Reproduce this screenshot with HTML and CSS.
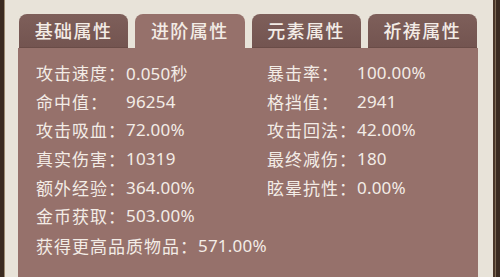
FILE: index.html
```html
<!DOCTYPE html>
<html lang="zh-CN">
<head>
    <meta charset="UTF-8">
    <title>进阶属性</title>
    <link rel="stylesheet" href="styles.css">
</head>
<body>
    <div class="edge edge-left"></div>
    <div class="frame">
        <div class="tabs">
            <div class="tab">基础属性</div>
            <div class="tab active">进阶属性</div>
            <div class="tab">元素属性</div>
            <div class="tab">祈祷属性</div>
        </div>
        <div class="panel">
            <div class="stats">
                <div class="stat"><span class="label">攻击速度：</span><span class="value">0.050秒</span></div>
                <div class="stat"><span class="label">暴击率：</span><span class="value">100.00%</span></div>
                <div class="stat"><span class="label">命中值：</span><span class="value">96254</span></div>
                <div class="stat"><span class="label">格挡值：</span><span class="value">2941</span></div>
                <div class="stat"><span class="label">攻击吸血：</span><span class="value">72.00%</span></div>
                <div class="stat"><span class="label">攻击回法：</span><span class="value">42.00%</span></div>
                <div class="stat"><span class="label">真实伤害：</span><span class="value">10319</span></div>
                <div class="stat"><span class="label">最终减伤：</span><span class="value">180</span></div>
                <div class="stat"><span class="label">额外经验：</span><span class="value">364.00%</span></div>
                <div class="stat"><span class="label">眩晕抗性：</span><span class="value">0.00%</span></div>
                <div class="stat"><span class="label">金币获取：</span><span class="value">503.00%</span></div>
                <div class="stat"></div>
                <div class="stat wide"><span class="label">获得更高品质物品：</span><span class="value">571.00%</span></div>
            </div>
        </div>
    </div>
    <div class="edge edge-right"></div>
</body>
</html>
```

FILE: styles.css
```css
html, body {
    margin: 0;
    padding: 0;
    height: 100%;
    overflow: hidden;
}
body {
    display: flex;
    background: #e8e3d9;
    font-family: "Noto Sans", "Noto Sans CJK SC", sans-serif;
    color: #f3ece6;
}
.edge {
    flex: none;
    background: #3a2a20;
}
.edge-left {
    width: 4px;
    border-right: 1px solid #9c8a72;
}
.edge-right {
    width: 5px;
    border-left: 2px solid #4a3629;
    box-shadow: inset 1px 0 0 #7d6a55;
    margin-left: 1px;
}
.frame {
    flex: 1;
    display: flex;
    flex-direction: column;
    padding: 14px 14px 0 13px;
}
.tabs {
    display: flex;
    gap: 5px;
    height: 34px;
}
.tab {
    flex: 1;
    margin: 0 1px;
    display: flex;
    align-items: center;
    justify-content: center;
    border-radius: 8px 8px 0 0;
    background: linear-gradient(#7e5f5a, #735450);
    box-shadow: inset 0 -1px 0 #6a4c47;
    font-family: "Noto Sans CJK SC", sans-serif;
    font-size: 18px;
    font-weight: 500;
    letter-spacing: 1.5px;
    padding-bottom: 2px;
}
.tab.active {
    background: #96716b;
    box-shadow: none;
}
.panel {
    flex: 1;
    background: #96716b;
    padding: 10px 0 0 18px;
}
.stats {
    display: grid;
    grid-template-columns: 231px 1fr;
    grid-auto-rows: 28.7px;
}
.stat {
    display: flex;
    align-items: center;
    white-space: nowrap;
}
.stat.wide {
    grid-column: 1 / 3;
    margin-top: 3px;
}
.label {
    min-width: 90px;
    flex: none;
    font-family: "Noto Sans CJK SC", sans-serif;
    font-size: 17px;
    letter-spacing: 1px;
}
.value {
    font-size: 17px;
    letter-spacing: 0.2px;
}
```
